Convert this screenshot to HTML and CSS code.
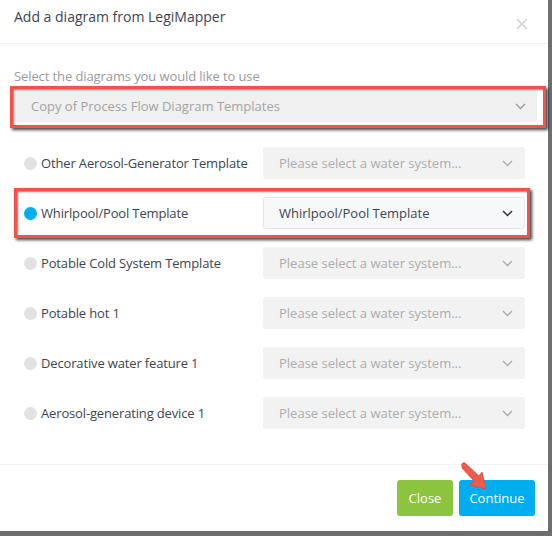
FILE: index.html
```html
<!DOCTYPE html>
<html>
<head>
<meta charset="utf-8">
<link rel="stylesheet" href="styles.css">
</head>
<body>
<div class="modal">
  <div class="header">
    <div class="title">Add a diagram from LegiMapper</div>
    <div class="close-x">
      <svg width="12" height="12" viewBox="0 0 12 12"><path d="M1 1L11 11M11 1L1 11" stroke="#c9ccd1" stroke-width="1.4" fill="none"/></svg>
    </div>
  </div>
  <div class="body">
    <div class="label">Select the diagrams you would like to use</div>
    <div class="main-select">
      <span>Copy of Process Flow Diagram Templates</span>
      <svg class="chev" width="11" height="7" viewBox="0 0 11 7"><path d="M1 1L5.5 5.5L10 1" stroke="#999" stroke-width="1.3" fill="none"/></svg>
      <div class="hl hl1"></div>
    </div>
    <div class="rows">
      <div class="row">
        <div class="opt"><span class="radio"></span>Other Aerosol-Generator Template</div>
        <div class="sel"><span>Please select a water system...</span><svg class="chev" width="11" height="7" viewBox="0 0 11 7"><path d="M1 1L5.5 5.5L10 1" stroke="#aaa" stroke-width="1.3" fill="none"/></svg></div>
      </div>
      <div class="row active">
        <div class="opt"><span class="radio on"></span>Whirlpool/Pool Template</div>
        <div class="sel chosen"><span>Whirlpool/Pool Template</span><svg class="chev" width="11" height="7" viewBox="0 0 11 7"><path d="M1 1L5.5 5.5L10 1" stroke="#333" stroke-width="1.5" fill="none"/></svg></div>
        <div class="hl hl2"></div>
      </div>
      <div class="row">
        <div class="opt"><span class="radio"></span>Potable Cold System Template</div>
        <div class="sel"><span>Please select a water system...</span><svg class="chev" width="11" height="7" viewBox="0 0 11 7"><path d="M1 1L5.5 5.5L10 1" stroke="#aaa" stroke-width="1.3" fill="none"/></svg></div>
      </div>
      <div class="row">
        <div class="opt"><span class="radio"></span>Potable hot 1</div>
        <div class="sel"><span>Please select a water system...</span><svg class="chev" width="11" height="7" viewBox="0 0 11 7"><path d="M1 1L5.5 5.5L10 1" stroke="#aaa" stroke-width="1.3" fill="none"/></svg></div>
      </div>
      <div class="row">
        <div class="opt"><span class="radio"></span>Decorative water feature 1</div>
        <div class="sel"><span>Please select a water system...</span><svg class="chev" width="11" height="7" viewBox="0 0 11 7"><path d="M1 1L5.5 5.5L10 1" stroke="#aaa" stroke-width="1.3" fill="none"/></svg></div>
      </div>
      <div class="row">
        <div class="opt"><span class="radio"></span>Aerosol-generating device 1</div>
        <div class="sel"><span>Please select a water system...</span><svg class="chev" width="11" height="7" viewBox="0 0 11 7"><path d="M1 1L5.5 5.5L10 1" stroke="#aaa" stroke-width="1.3" fill="none"/></svg></div>
      </div>
    </div>
  </div>
  <div class="footer">
    <button class="btn close">Close</button>
    <button class="btn continue">Continue
      <svg class="arrow" width="32" height="32" viewBox="0 0 32 32">
        <path d="M3 4 C2 2 4 0 6 1 L20 14 L23 10 L27 27 L10 23 L15 19 L3 6 Z" fill="#f05a4a" stroke="#e04a3c" stroke-width="0.8" stroke-linejoin="round"/>
      </svg>
    </button>
  </div>
</div>
</body>
</html>
```
FILE: styles.css
```css
html, body {
  margin: 0;
  padding: 0;
}
body {
  width: 552px;
  height: 536px;
  background: #6e6e6e;
  font-family: "Open Sans", "Liberation Sans", sans-serif;
  overflow: hidden;
}
.modal {
  width: 548px;
  height: 531px;
  background: #fff;
  display: flex;
  flex-direction: column;
}
.header {
  height: 44px;
  border-bottom: 1px solid #f2f2f2;
  display: flex;
  align-items: center;
  justify-content: space-between;
  padding: 0 20px 0 14px;
  box-sizing: border-box;
}
.title {
  font-size: 14px;
  color: #3d4552;
  margin-top: -11px;
}
.close-x {
  display: flex;
  margin-top: 4px;
}
.body {
  padding: 24px 12px 0 14px;
  flex: 1;
}
.label {
  font-size: 13px;
  color: #9a9a9a;
  line-height: 16px;
  letter-spacing: -0.1px;
}
.main-select {
  position: relative;
  margin-top: 6px;
  height: 32px;
  background: #f0f0f0;
  border-radius: 2px;
  display: flex;
  align-items: center;
  justify-content: space-between;
  padding: 0 11px 0 17px;
  font-size: 13px;
  color: #a3a3a3;
  width: 523px;
  box-sizing: border-box;
}
.hl {
  position: absolute;
  border: 3px solid #f1524a;
  box-shadow: 2px 2px 3px rgba(0,0,0,0.75), inset 1px 1px 2px rgba(0,0,0,0.5);
  pointer-events: none;
}
.hl1 {
  left: -4px;
  top: -4px;
  right: -9px;
  bottom: -6px;
}
.rows {
  margin-top: 25px;
  display: flex;
  flex-direction: column;
  gap: 18px;
  padding-left: 10px;
}
.row {
  position: relative;
  display: flex;
  align-items: center;
  height: 32px;
}
.hl2 {
  left: -10px;
  top: -9px;
  width: 510px;
  height: 44px;
}
.opt {
  width: 239px;
  display: flex;
  align-items: center;
  font-size: 13px;
  color: #3d4552;
  letter-spacing: -0.15px;
}
.radio {
  width: 13px;
  height: 13px;
  border-radius: 50%;
  background: #e2e2e2;
  margin-right: 4px;
  flex: none;
}
.radio.on {
  background: #00aeef;
}
.sel {
  width: 262px;
  height: 32px;
  box-sizing: border-box;
  background: #f2f2f2;
  border-radius: 3px;
  display: flex;
  align-items: center;
  justify-content: space-between;
  padding: 0 12px 0 16px;
  font-size: 13px;
  color: #adadad;
}
.sel.chosen {
  background: #f6f8fa;
  border: 1px solid #dfe6ec;
  color: #3d4552;
  padding-left: 15px;
  padding-right: 11px;
}
.footer {
  border-top: 1px solid #f2f2f2;
  margin-top: auto;
  height: 67px;
  display: flex;
  justify-content: flex-end;
  align-items: flex-start;
  gap: 6px;
  padding: 15px 13px 0 0;
  box-sizing: border-box;
}
.btn {
  position: relative;
  border: none;
  border-radius: 3px;
  height: 36px;
  color: #fff;
  font-family: "Open Sans", "Liberation Sans", sans-serif;
  font-size: 13px;
  padding: 0;
}
.close {
  width: 56px;
  background: #8cc43f;
}
.continue {
  width: 76px;
  background: #00aeef;
}
.arrow {
  position: absolute;
  left: 0;
  top: -18px;
}
```
